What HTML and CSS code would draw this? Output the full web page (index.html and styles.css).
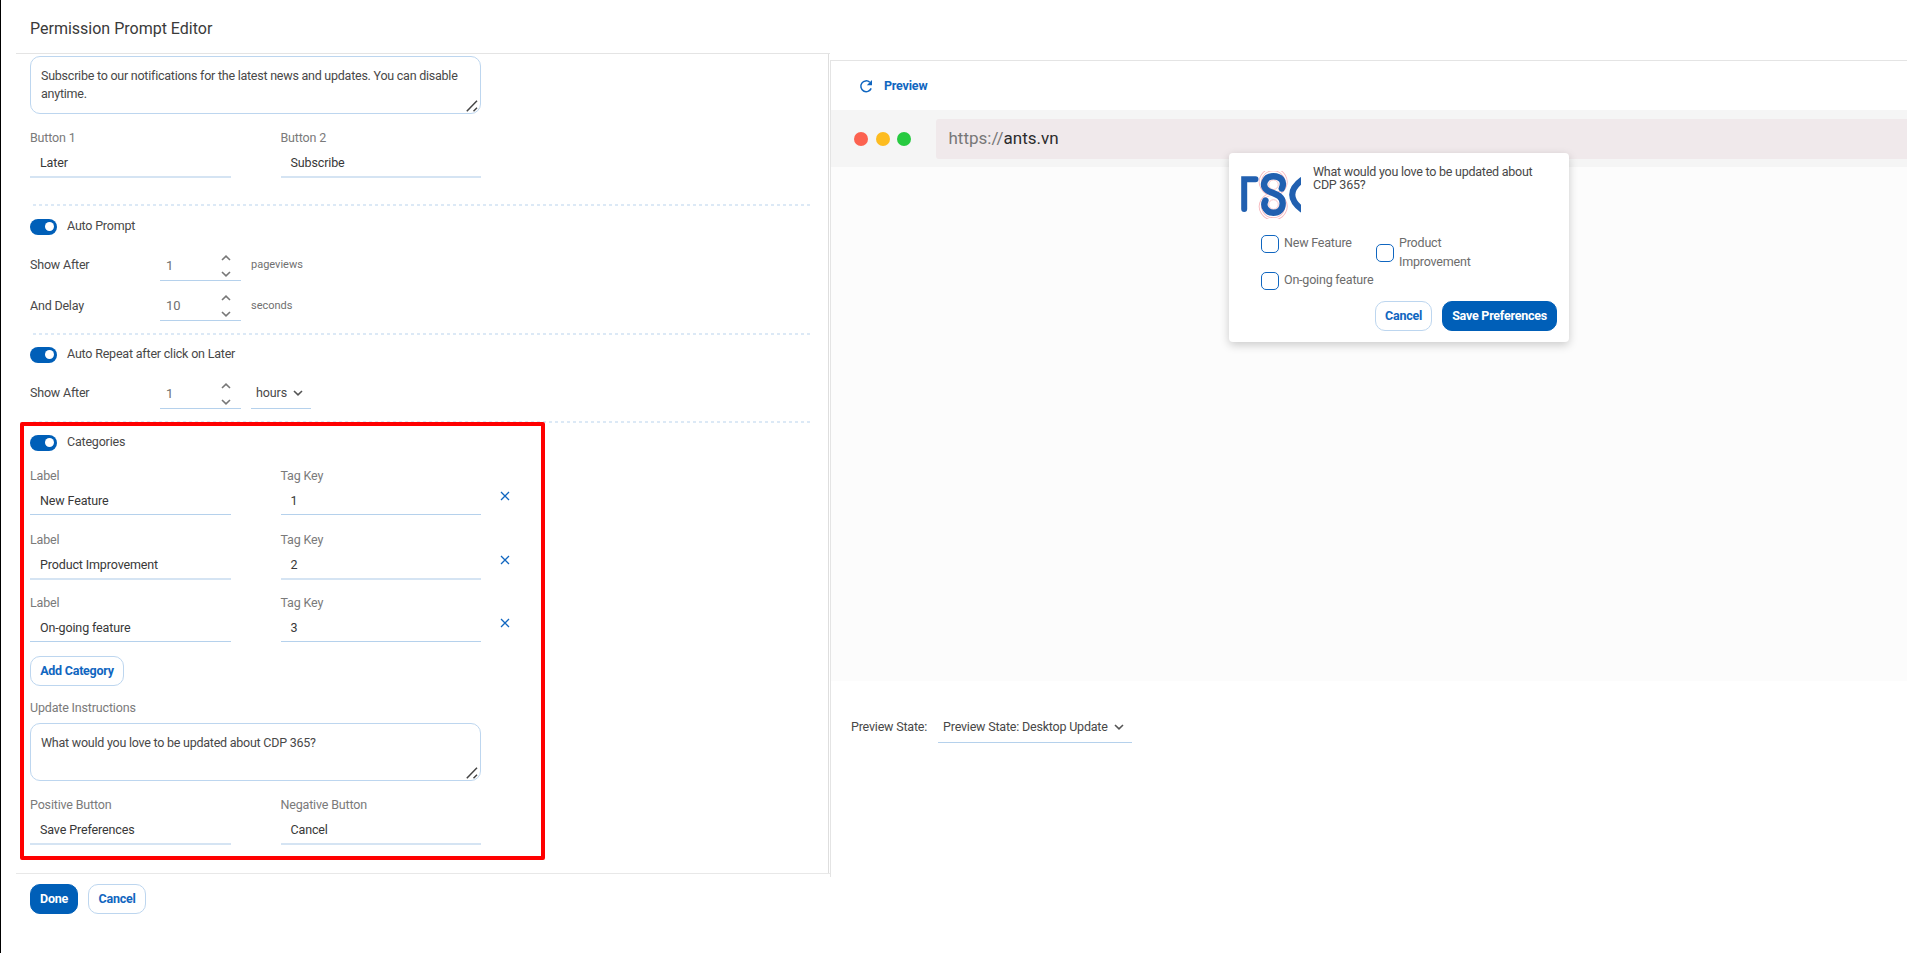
FILE: index.html
```html
<!DOCTYPE html>
<html lang="en">
<head>
<meta charset="utf-8">
<title>Permission Prompt Editor</title>
<link rel="stylesheet" href="styles.css">
</head>
<body>
<svg class="defs" width="0" height="0" aria-hidden="true">
  <symbol id="up" viewBox="0 0 10 6"><path d="M1 5 5 1.2 9 5" fill="none" stroke="currentColor" stroke-width="1.6"/></symbol>
  <symbol id="down" viewBox="0 0 10 6"><path d="M1 1 5 4.8 9 1" fill="none" stroke="currentColor" stroke-width="1.6"/></symbol>
  <symbol id="close" viewBox="0 0 10 10"><path d="M1 1 9 9M9 1 1 9" fill="none" stroke="currentColor" stroke-width="1.3"/></symbol>
  <symbol id="grip" viewBox="0 0 12 12"><path d="M.8 11.2 11 .8M7.5 11.2 11 7.7" fill="none" stroke="currentColor" stroke-width="1.5"/></symbol>
</svg>
<div class="page">
  <section class="editor">
    <h1 class="title">Permission Prompt Editor</h1>
    <div class="form">
      <div class="textarea"><span>Subscribe to our notifications for the latest news and updates. You can disable</span><br>anytime.<svg class="grip"><use href="#grip"/></svg></div>
      <div class="fields mt-buttons">
        <div class="field"><label>Button 1</label><div class="value soft">Later</div></div>
        <div class="field"><label>Button 2</label><div class="value soft">Subscribe</div></div>
      </div>
      <div class="dots d1"></div>
      <div class="switch-row s1"><span class="switch"></span><span class="switch-text">Auto Prompt</span></div>
      <div class="step-row r1"><span class="name">Show After</span><div class="stepper"><span>1</span><div class="arrows"><svg><use href="#up"/></svg><svg><use href="#down"/></svg></div></div><span class="unit">pageviews</span></div>
      <div class="step-row r2"><span class="name">And Delay</span><div class="stepper"><span>10</span><div class="arrows"><svg><use href="#up"/></svg><svg><use href="#down"/></svg></div></div><span class="unit">seconds</span></div>
      <div class="dots d2"></div>
      <div class="switch-row s2"><span class="switch"></span><span class="switch-text">Auto Repeat after click on Later</span></div>
      <div class="step-row r3"><span class="name">Show After</span><div class="stepper"><span>1</span><div class="arrows"><svg><use href="#up"/></svg><svg><use href="#down"/></svg></div></div><div class="select hours">hours<svg><use href="#down"/></svg></div></div>
      <div class="dots d3"></div>
      <div class="switch-row s3"><span class="switch"></span><span class="switch-text">Categories</span></div>
      <div class="categories">
        <div class="fields">
          <div class="field"><label>Label</label><div class="value">New Feature</div></div>
          <div class="field"><label>Tag Key</label><div class="value">1</div></div>
          <svg class="close"><use href="#close"/></svg>
        </div>
        <div class="fields">
          <div class="field"><label>Label</label><div class="value soft">Product Improvement</div></div>
          <div class="field"><label>Tag Key</label><div class="value soft">2</div></div>
          <svg class="close"><use href="#close"/></svg>
        </div>
        <div class="fields">
          <div class="field"><label>Label</label><div class="value">On-going feature</div></div>
          <div class="field"><label>Tag Key</label><div class="value">3</div></div>
          <svg class="close"><use href="#close"/></svg>
        </div>
      </div>
      <button class="btn add">Add Category</button>
      <label class="instructions">Update Instructions</label>
      <div class="textarea"><span>What would you love to be updated about CDP 365?</span><svg class="grip"><use href="#grip"/></svg></div>
      <div class="fields mt-buttons">
        <div class="field"><label>Positive Button</label><div class="value soft">Save Preferences</div></div>
        <div class="field"><label>Negative Button</label><div class="value soft">Cancel</div></div>
      </div>
      <div class="highlight"></div>
    </div>
    <div class="footer"><button class="btn primary done">Done</button><button class="btn cancel">Cancel</button></div>
  </section>
  <section class="preview">
    <div class="preview-head">
      <svg width="14" height="14" viewBox="0 0 14 14"><path d="M12.2 9.4A5.4 5.4 0 1 1 10.8 3.200" fill="none" stroke="#1066c0" stroke-width="1.5"/><path d="M13 1v5.200H7.800z" fill="#1066c0"/></svg>
      <span>Preview</span>
    </div>
    <div class="browser-bar">
      <i class="red"></i><i class="yellow"></i><i class="green"></i>
      <div class="url"><span>https://</span><b>ants.vn</b></div>
    </div>
    <div class="viewport">
      <div class="popup">
        <div class="popup-head">
          <svg class="logo" width="60" height="48" viewBox="0 0 60 48">
            <path d="M3.200 38V8.300H14.500" fill="none" stroke="#2160b0" stroke-width="6" stroke-linecap="round" stroke-linejoin="miter"/>
            <path d="M32.600 23.200a12.800 12.300 0 1 0-.8 0 12.800 12.300 0 1 0 .8 0" fill="none" stroke="#f7b9bf" stroke-width="3.200"/>
            <path d="M32.600 23.200a12.800 12.300 0 1 0-.8 0 12.800 12.300 0 1 0 .8 0" fill="none" stroke="#fff" stroke-width="1.400"/>
            <circle cx="32.500" cy="13.700" r="4.800" fill="#fff" stroke="#f7c4c8"/><circle cx="32.500" cy="33.500" r="4.800" fill="#fff" stroke="#f7c4c8"/>
            <path d="M40.800 17.500C44.200 10 39.400 5.200 32.500 5.200 23.500 5.200 20.200 14.600 26.200 19.200 30.500 22.600 41.700 23.200 41.700 32.200 41.700 38.500 37.600 41.700 32.300 41.700 26 41.700 21.200 35.500 24.400 29.600" fill="none" stroke="#2160b0" stroke-width="6.400" stroke-linecap="round"/>
            <path d="M61.500 8.500Q41 23.500 61.500 39" fill="none" stroke="#2160b0" stroke-width="6.200"/>
          </svg>
          <div class="question">What would you love to be updated about<br>CDP 365?</div>
        </div>
        <div class="checks">
          <div class="check c1"><i></i>New Feature</div>
          <div class="check c2"><i></i><span>Product<br>Improvement</span></div>
          <div class="check c3"><i></i>On-going feature</div>
        </div>
        <div class="popup-actions"><button class="btn pcancel">Cancel</button><button class="btn primary save">Save Preferences</button></div>
      </div>
    </div>
    <div class="state"><span>Preview State:</span><div class="select desktop">Preview State: Desktop Update<svg><use href="#down"/></svg></div></div>
  </section>
</div>
</body>
</html>
```

FILE: styles.css
```css
* { box-sizing: border-box; }
body {
  margin: 0;
  background: #fff;
  color: #484848;
  font: 12.5px/20px Roboto, sans-serif;
  letter-spacing: -.2px;
}
.defs { display: block; position: absolute; }
.page { display: flex; height: 953px; border-left: 1px solid #000; overflow: hidden; }
.editor { width: 814px; margin-left: 15px; flex: none; }
.title { margin: 0; height: 54px; padding: 19px 0 0 14px; border-bottom: 1px solid #e4e4e4; font-size: 16px; font-weight: 400; letter-spacing: 0; color: #3a3a3a; }
.form { position: relative; height: 819px; padding: 2px 0 0 14px; width: 813px; border-right: 1px solid #dedede; display: flow-root; }
.textarea { position: relative; width: 451px; height: 58px; border: 1px solid #bdd6ef; border-radius: 10px; padding: 10px 10px 0; line-height: 17.5px; letter-spacing: -.24px; white-space: nowrap; }
.grip { position: absolute; right: 2px; bottom: 1px; width: 12px; height: 12px; color: #444; }
.fields { display: flex; gap: 50px; height: 50px; }
.mt-buttons { margin-top: 14px; }
.field { width: 200.5px; }
label { display: block; height: 20px; color: #7a7a7a; letter-spacing: -.17px; }
.value { height: 29px; line-height: 29px; padding-left: 10px; color: #383838; border-bottom: 1px solid #b5d1ec; letter-spacing: -.13px; }
.value.soft { height: 30px; border-bottom: 2px solid #d5e4f3; }
.dots { width: 780px; height: 2px; margin-left: 3px; background: repeating-linear-gradient(90deg, #dce9f6 0 3px, transparent 3px 6px); }
.d1 { margin-top: 26px; }
.d2 { margin-top: 12px; }
.d3 { margin-top: 12px; }
.switch-row { display: flex; align-items: center; gap: 10px; height: 16px; }
.switch-text { padding-bottom: 2px; }
.s1 { margin-top: 13px; }
.s2 { margin-top: 12px; }
.s3 { margin-top: 12px; }
.switch { width: 27px; height: 16px; border-radius: 8px; background: #005fb8; }
.switch::after { content: ""; display: block; width: 9px; height: 9px; margin: 3px 0 0 15px; border-radius: 50%; background: #fff; }
.step-row { display: flex; height: 32px; }
.r1 { margin-top: 14px; }
.r2 { margin-top: 7px; height: 33px; }
.r3 { margin-top: 14px; }
.name { width: 130px; padding-top: 6px; }
.r2 .name, .r2 .unit { padding-top: 8px; }
.stepper { width: 81px; display: flex; justify-content: space-between; border-bottom: 1px solid #b5d1ec; padding: 0 10px 0 6px; color: #707070; font-size: 13px; letter-spacing: 0; }
.stepper > span { padding-top: 7px; }
.r2 .stepper > span { padding-top: 8px; }
.arrows { display: flex; flex-direction: column; gap: 10px; padding-top: 6px; }
.r2 .arrows { padding-top: 7px; }
.arrows svg { width: 10px; height: 6px; color: #777; }
.unit { margin-left: 10px; padding-top: 6px; font-size: 11px; color: #707070; letter-spacing: 0; }
.select { display: flex; align-items: center; gap: 6px; border-bottom: 1px solid #b5d1ec; padding-left: 5px; }
.select svg { width: 10px; height: 6px; color: #555; }
.hours { width: 60px; margin-left: 10px; letter-spacing: -.1px; }
.categories { margin-top: 15px; display: grid; row-gap: 13.5px; }
.close { width: 10px; height: 10px; margin: 25px 0 0 -31px; color: #1066c0; }
.btn { font: 700 12.5px/28px Roboto, sans-serif; letter-spacing: -.25px; height: 30px; padding: 0; border: 1px solid #bdd6ef; border-radius: 10px; background: #fff; color: #1066c0; display: block; flex: none; }
.primary { background: #005fb8; border-color: #005fb8; color: #fff; }
.add { width: 94px; margin-top: 13px; }
.instructions { margin: 12px 0 5px; }
.highlight { position: absolute; left: 4px; top: 368px; width: 525px; height: 438px; border: 4px solid #f00; border-radius: 2px; }
.footer { display: flex; gap: 10px; border-top: 1px solid #e8e8e8; padding: 10px 0 0 14px; }
.done { width: 48px; }
.cancel { width: 58px; }
.preview { width: 1077px; height: 817px; margin-top: 60px; border-left: 1px solid #e4e4e4; border-top: 1px solid #e4e4e4; flex: none; }
.preview-head { display: flex; align-items: center; gap: 11px; height: 49px; padding-left: 28px; font-weight: 700; color: #1066c0; }
.browser-bar { display: flex; align-items: center; height: 57px; background: #f5f5f5; padding-left: 23px; gap: 7.5px; }
.browser-bar i { width: 14px; height: 14px; border-radius: 50%; }
.red { background: #fc6250; }
.yellow { background: #fdbc20; }
.green { background: #27ca40; }
.url { flex: 1; height: 40px; margin-left: 17px; padding-left: 13px; background: #f0e9eb; border-radius: 3px 0 0 3px; font-size: 17px; line-height: 39px; letter-spacing: 0; color: #777; }
.url b { font-weight: 400; color: #2c2c2c; }
.viewport { height: 514px; background: #fcfcfc; }
.popup { position: relative; top: -14px; left: 398px; width: 340px; height: 189px; background: #fff; border-radius: 4px; box-shadow: 0 3px 10px rgba(0,0,0,.2); padding: 12px; }
.popup-head { display: flex; gap: 12px; height: 67px; }
.logo { margin-top: 6px; }
.question { line-height: 13px; letter-spacing: -.24px; white-space: nowrap; }
.checks { display: grid; grid-template-columns: 115px 130px; grid-template-rows: 41px 28px; padding-left: 20px; line-height: 18.5px; color: #6c6c6c; }
.check { display: flex; align-items: center; gap: 5px; white-space: nowrap; height: 19px; }
.check i { width: 18px; height: 18px; border: 1.5px solid #1066c0; border-radius: 5px; flex: none; }
.c1 { margin-top: 2px; }
.c2 { margin-top: 2px; height: 37px; }
.c3 { margin-top: -2px; }
.popup-actions { display: flex; justify-content: flex-end; gap: 10px; }
.pcancel { width: 57px; }
.save { width: 115px; }
.state { display: flex; margin: 31px 0 0 20px; height: 31px; align-items: center; }
.state > span { padding-bottom: 2px; }
.desktop { width: 194px; height: 31px; margin-left: 11px; padding-bottom: 1px; }
```
